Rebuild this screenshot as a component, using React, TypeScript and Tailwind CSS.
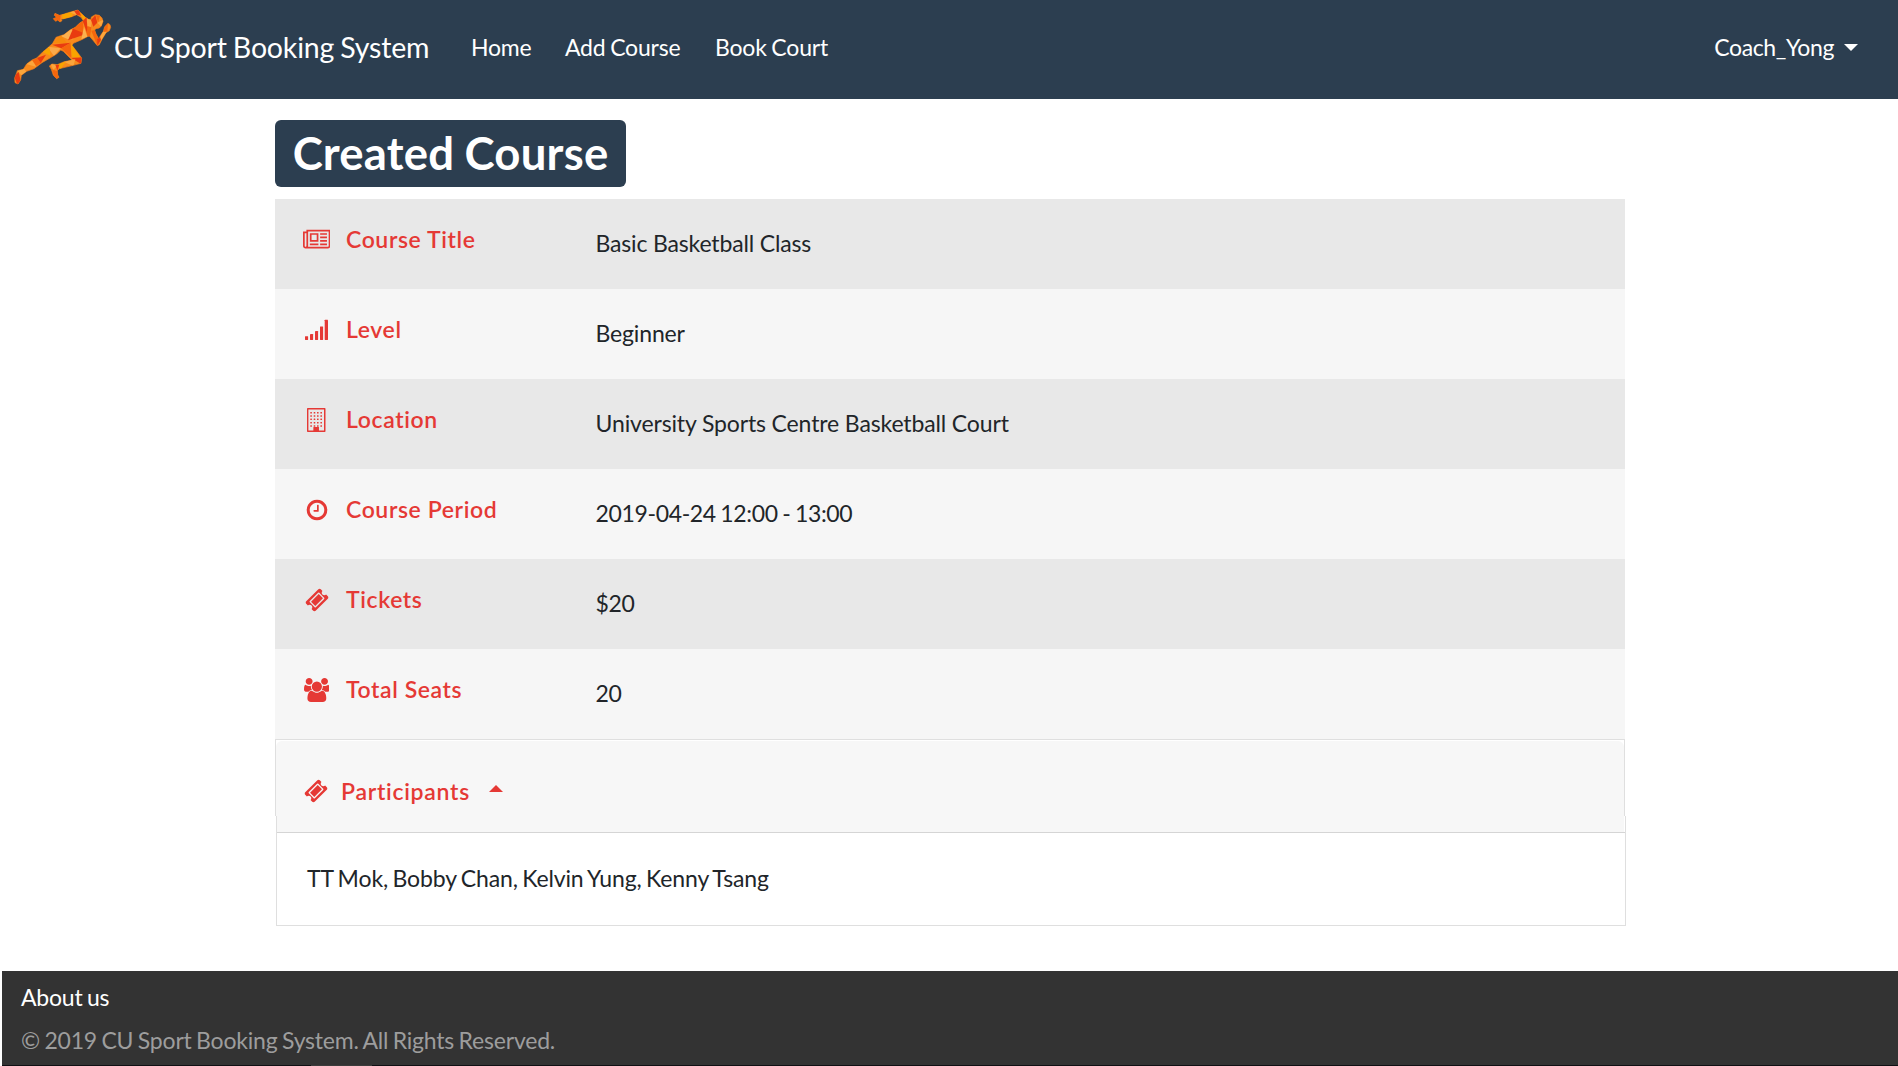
import type { ReactNode } from "react";

const RUNNER =
  "M135 22L148 28L160 25L175 20L204 12L212 20L226 34L236 40L243 40L244 33L256 26L268 28L276 36L279 46L274 60L268 66L258 68L254 72L258 84L266 98L272 88L280 76L284 62L294 52L300 56L302 64L298 74L288 80L276 100L268 116L262 119L250 104L238 90L232 92L215 101L190 112L186 118L200 136L215 156L213 172L190 178L165 184L148 188L142 194L143 206L147 214L140 218L130 208L124 190L118 180L126 174L142 176L160 168L186 162L174 150L160 136L152 132L140 144L120 156L96 170L72 188L50 196L34 208L32 222L24 234L15 230L14 216L20 200L22 194L40 190L50 174L66 162L80 156L98 138L115 124L128 112L138 94L152 89L162 86L180 72L196 64L208 52L220 44L213 34L200 26L185 32L162 38L154 40L156 44L150 48L143 42L137 46L130 38L140 34L133 28Z";

const facets: [string, string][] = [
  ["#f5660d", "130 20 152 28 150 50 128 48"],
  ["#f9a400", "156 24 190 14 186 34 158 40"],
  ["#fba63c", "178 18 204 10 200 28"],
  ["#e93b10", "192 14 206 10 218 30 200 26"],
  ["#f9a400", "208 18 228 34 222 46"],
  ["#fbb04e", "152 90 188 66 190 100 174 100"],
  ["#f5660d", "184 70 218 44 222 84 190 72"],
  ["#e93b10", "218 44 230 34 236 60 232 84"],
  ["#fba63c", "230 36 246 44 242 66 232 62"],
  ["#f5660d", "232 60 244 64 240 92 230 88"],
  ["#e93b10", "189 68 174 103 228 84"],
  ["#fbb04e", "222 62 232 92 214 100"],
  ["#f58a0c", "128 112 152 88 172 112"],
  ["#e93b10", "126 116 182 110 154 127"],
  ["#f9a94a", "112 122 152 127 132 150"],
  ["#f5660d", "154 127 182 110 184 156"],
  ["#f9a400", "182 110 214 158 186 152"],
  ["#e93b10", "184 156 218 154 213 174"],
  ["#fba63c", "158 166 196 160 190 180"],
  ["#f9a400", "140 176 168 166 152 190"],
  ["#fba63c", "122 174 144 176 130 192"],
  ["#e93b10", "136 176 148 176 142 194"],
  ["#f5660d", "126 190 142 196 146 218 134 216"],
  ["#f9a400", "98 138 118 122 122 150"],
  ["#e93b10", "80 156 108 146 92 172"],
  ["#fba63c", "48 174 74 160 78 182"],
  ["#f5660d", "66 162 82 156 92 172 78 180"],
  ["#fba63c", "22 194 42 188 50 198 34 208"],
  ["#e93b10", "12 210 26 198 32 224 22 236"],
  ["#e93b10", "243 42 256 28 262 50 250 62"],
  ["#f5660d", "258 28 270 30 264 50"],
  ["#fba63c", "262 50 282 40 274 62"],
  ["#f5660d", "244 74 256 72 266 100 262 120"],
  ["#e93b10", "262 100 272 88 274 100 262 120"],
  ["#fba63c", "280 76 290 78 274 104 270 92"],
  ["#f5660d", "284 62 294 52 292 76 280 78"],
];

function RunnerLogo() {
  return (
    <svg viewBox="0 0 330 246" className="h-[82px] w-[110px] shrink-0" aria-hidden="true">
      <clipPath id="runner">
        <path d={RUNNER} />
      </clipPath>
      <path d={RUNNER} fill="#f88a1c" stroke="#f07a18" strokeWidth="2" strokeLinejoin="round" />
      <g clipPath="url(#runner)">
        {facets.map(([fill, points]) => (
          <polygon key={points} fill={fill} points={points} />
        ))}
      </g>
    </svg>
  );
}

function NewspaperIcon() {
  return (
    <svg viewBox="0 0 2048 1792" className="ml-px h-6 w-[27.4px] shrink-0" fill="currentColor" aria-hidden="true">
      <path d="M1024 512h-384v384h384v-384zm128 640v128h-640v-128h640zm0-768v640h-640v-640h640zm640 768v128h-512v-128h512zm0-256v128h-512v-128h512zm0-256v128h-512v-128h512zm0-256v128h-512v-128h512zm-1536 960v-960h-128v960q0 26 19 45t45 19 45-19 19-45zm1664 0v-1088h-1536v1088q0 33-11 64h1483q26 0 45-19t19-45zm128-1216v1216q0 80-56 136t-136 56h-1664q-80 0-136-56t-56-136v-1088h256v-128h1792z" />
    </svg>
  );
}

function SignalIcon() {
  return (
    <svg viewBox="0 0 24 24" className="size-6" fill="currentColor" aria-hidden="true">
      <rect x="1" y="18.2" width="3.1" height="3.7" rx=".4" />
      <rect x="6" y="16" width="3.1" height="5.9" rx=".4" />
      <rect x="11" y="13" width="3.1" height="8.9" rx=".4" />
      <rect x="16" y="8.4" width="3.1" height="13.5" rx=".4" />
      <rect x="20.7" y="1.8" width="3.3" height="20.1" rx=".4" />
    </svg>
  );
}

function BuildingIcon() {
  return (
    <svg viewBox="0 0 24 24" className="size-6" fill="currentColor" aria-hidden="true">
      <path
        fillRule="evenodd"
        d="M3.8 0h17q.7 0 .7.8v22.4q0 .8-.7.8h-17q-.8 0-.8-.8V.8q0-.8.8-.8zM4.4 1.5v21h5.2v-3q0-.5.5-.5h4.2q.5 0 .5.5v3h5.2v-21z"
      />
      {[4, 7.3, 10.6, 13.9, 17.2].map((y) =>
        [6.3, 9.7, 13, 16.4].map((x) => <rect key={`${x}-${y}`} x={x} y={y} width="1.6" height="1.5" rx=".3" />),
      )}
      <path d="M9.6 19h5.2v4h-5.2z" />
    </svg>
  );
}

function ClockIcon() {
  return (
    <svg viewBox="0 0 1792 1792" className="ml-0.5 size-6" fill="currentColor" aria-hidden="true">
      <path d="M1024 544v448q0 14-9 23t-23 9h-320q-14 0-23-9t-9-23v-64q0-14 9-23t23-9h224v-352q0-14 9-23t23-9h64q14 0 23 9t9 23zm416 352q0-148-73-273t-198-198-273-73-273 73-198 198-73 273 73 273 198 198 273 73 273-73 198-198 73-273zm224 0q0 209-103 385.5t-279.5 279.5-385.5 103-385.5-103-279.5-279.5-103-385.5 103-385.5 279.5-279.5 385.5-103 385.5 103 279.5 279.5 103 385.5z" />
    </svg>
  );
}

function TicketIcon() {
  return (
    <svg viewBox="0 0 1792 1792" className="size-6" fill="currentColor" aria-hidden="true">
      <path d="M1024 452l316 316-572 572-316-316zm-211 979l618-618q19-19 19-45t-19-45l-362-362q-18-18-45-18t-45 18l-618 618q-19 19-19 45t19 45l362 362q18 18 45 18t45-18zm889-637l-907 908q-37 37-90.5 37t-90.5-37l-126-126q56-56 56-136t-56-136-136-56-136 56l-125-126q-37-37-37-90.5t37-90.5l907-906q37-37 90.5-37t90.5 37l125 125q-56 56-56 136t56 136 136 56 136-56l126 125q37 37 37 90.5t-37 90.5z" />
    </svg>
  );
}

function GroupIcon() {
  return (
    <svg viewBox="0 0 1920 1792" className="ml-px h-6 w-[25.7px] shrink-0" fill="currentColor" aria-hidden="true">
      <path d="M593 896q-162 5-265 128h-134q-82 0-138-40.5t-56-118.5q0-353 124-353 6 0 43.5 21t97.5 42.5 119 21.5q67 0 133-23-5 37-5 66 0 139 81 256zm1071 637q0 120-73 189.5t-194 69.5h-874q-121 0-194-69.5t-73-189.5q0-53 3.5-103.5t14-109 26.5-108.5 43-97.5 62-81 85.5-53.5 111.5-20q10 0 43 21.5t73 48 107 48 135 21.5 135-21.5 107-48 73-48 43-21.5q61 0 111.5 20t85.5 53.5 62 81 43 97.5 26.5 108.5 14 109 3.5 103.5zm-1024-1277q0 106-75 181t-181 75-181-75-75-181 75-181 181-75 181 75 75 181zm704 384q0 159-112.5 271.5t-271.5 112.5-271.5-112.5-112.5-271.5 112.5-271.5 271.5-112.5 271.5 112.5 112.5 271.5zm576 225q0 78-56 118.5t-138 40.5h-134q-103-123-265-128 81-117 81-256 0-29-5-66 66 23 133 23 59 0 119-21.5t97.5-42.5 43.5-21q124 0 124 353zm-128-609q0 106-75 181t-181 75-181-75-75-181 75-181 181-75 181 75 75 181z" />
    </svg>
  );
}

const rows: { icon: ReactNode; label: string; value: string; tracking: string }[] = [
  { icon: <NewspaperIcon />, label: "Course Title", value: "Basic Basketball Class", tracking: "tracking-[-0.16px]" },
  { icon: <SignalIcon />, label: "Level", value: "Beginner", tracking: "tracking-[-0.15px]" },
  {
    icon: <BuildingIcon />,
    label: "Location",
    value: "University Sports Centre Basketball Court",
    tracking: "tracking-[-0.13px]",
  },
  { icon: <ClockIcon />, label: "Course Period", value: "2019-04-24 12:00 - 13:00", tracking: "tracking-[-0.35px] [word-spacing:-1px]" },
  { icon: <span className="ml-0.5"><TicketIcon /></span>, label: "Tickets", value: "$20", tracking: "tracking-[-0.3px]" },
  { icon: <GroupIcon />, label: "Total Seats", value: "20", tracking: "tracking-[-0.3px]" },
];

export default function App() {
  return (
    <div className="flex h-[1066px] w-[1898px] flex-col overflow-hidden bg-white font-['Lato',sans-serif] text-[23px] leading-9 text-[#212529]">
      <nav className="flex h-[99px] shrink-0 items-center bg-[#2c3e50] pr-10 pb-[5px] pl-[10px] text-white">
        <a className="flex items-center" href="#">
          <RunnerLogo />
          <span className="-ml-[6px] w-[315px] text-[28.5px] tracking-[-0.18px] whitespace-nowrap [word-spacing:-1px]">
            CU Sport Booking System
          </span>
        </a>
        <div className="ml-[42px] flex tracking-[-0.2px] [word-spacing:-1px]">
          <a className="w-[94px]" href="#">Home</a>
          <a className="w-[150px]" href="#">Add Course</a>
          <a href="#">Book Court</a>
        </div>
        <a className="ml-auto flex items-center gap-[10px] tracking-[-0.4px]" href="#">
          Coach_Yong
          <span className="border-x-[7px] border-t-[7px] border-x-transparent border-t-white" />
        </a>
      </nav>

      <main className="ml-[275px] w-[1351px] pt-[21px]">
        <h1 className="flex h-[67px] w-[351px] items-center justify-center rounded-md bg-[#2c3e50] pb-px text-[45.5px] leading-none font-bold tracking-[0.2px] text-white [word-spacing:-1px]">
          Created Course
        </h1>
        <dl className="mt-3 w-[1350px]">
          {rows.map((row) => (
            <div key={row.label} className="flex h-[90px] odd:bg-[#e8e8e8] even:bg-[#f6f6f6]">
              <dt className="flex w-[320.5px] pt-[22px] pl-[26px] font-semibold tracking-[0.6px] text-[#e53935]">
                <span className="mt-[7px] mr-[15px] flex h-6 w-[30px] justify-center">{row.icon}</span>
                {row.label}
              </dt>
              <dd className={`pt-[26px] ${row.tracking}`}>{row.value}</dd>
            </div>
          ))}
        </dl>
        <section>
          <div className="h-[77px] w-[1350px] border-x border-t border-[#dfdfdf]">
            <div className="mt-px h-[92px] w-[1348px] rounded-t-md bg-[#f7f7f7] pt-[32px] pl-[28px]">
              <button className="flex items-center font-semibold tracking-[0.72px] text-[#e53935]">
                <TicketIcon />
                <span className="ml-[13px]">Participants</span>
                <span className="mb-[6px] ml-[19px] border-x-[7px] border-b-[7px] border-x-transparent border-b-[#e53935]" />
              </button>
            </div>
          </div>
          <div className="ml-px h-[110px] w-[1350px] border-x border-b border-[#dfdfdf] pt-4">
            <p className="h-[93px] border-t border-[#d5d5d5] pt-[27px] pl-[30px] tracking-[-0.12px] [word-spacing:-1.4px]">
              TT Mok, Bobby Chan, Kelvin Yung, Kenny Tsang
            </p>
          </div>
        </section>
      </main>

      <footer className="mt-[45px] ml-[2px] flex h-[95px] shrink-0 flex-col bg-[#333333] pt-2 pl-[19px] tracking-[-0.2px] [word-spacing:-1.2px]">
        <a className="text-white" href="#">About us</a>
        <p className="mt-[7px] text-[#9d9d9d]">© 2019 CU Sport Booking System. All Rights Reserved.</p>
        <div className="mt-auto -ml-[19px] flex h-px shrink-0 bg-[#101014]">
          <span className="ml-[309px] w-[61px] bg-[#3c3c3c]" />
        </div>
      </footer>
    </div>
  );
}
